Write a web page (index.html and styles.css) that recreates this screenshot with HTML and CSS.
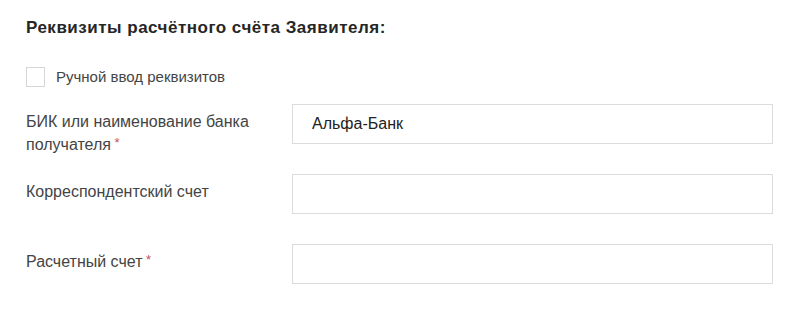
FILE: index.html
```html
<!DOCTYPE html>
<html lang="ru">
<head>
  <meta charset="UTF-8" />
  <title>Реквизиты</title>
  <link rel="stylesheet" href="styles.css">
</head>
<body>
  <div class="requisites">
    <h3>Реквизиты расчётного счёта Заявителя:</h3>

    <label class="manual">
      <input type="checkbox" />
      <span class="box"></span>
      Ручной ввод реквизитов
    </label>

    <div class="form-row">
      <div class="form-label">БИК или наименование банка получателя<span class="req"> *</span></div>
      <input class="form-input" type="text" value="Альфа-Банк" />
    </div>

    <div class="form-row">
      <div class="form-label">Корреспондентский счет</div>
      <input class="form-input" type="text" />
    </div>

    <div class="form-row">
      <div class="form-label">Расчетный счет<span class="req"> *</span></div>
      <input class="form-input" type="text" />
    </div>
  </div>
</body>
</html>
```

FILE: styles.css
```css
* {
  margin: 0;
  padding: 0;
  box-sizing: border-box;
  font-family: "Liberation Sans", Arial, sans-serif;
}

body {
  background: #fff;
}

.requisites {
  padding: 18px 0 0 26px;
  color: #444;
}

.requisites h3 {
  font-size: 17px;
  line-height: 20px;
  letter-spacing: 0.5px;
  font-weight: bold;
  color: #262626;
  margin-bottom: 29px;
}

.manual {
  display: flex;
  align-items: center;
  font-size: 15px;
  line-height: 20px;
  margin-bottom: 17px;
  cursor: pointer;
}

.manual input {
  display: none;
}

.manual .box {
  width: 19px;
  height: 20px;
  border: 1px solid #d6d6d6;
  background: #fff;
  margin-right: 11px;
}

.form-row {
  display: grid;
  grid-template-columns: 266px 481px;
  height: 40px;
  margin-bottom: 30px;
}

.form-label {
  font-size: 16px;
  line-height: 23px;
  padding-top: 6px;
  padding-right: 10px;
}

.req {
  font-size: 13px;
  line-height: 1;
  vertical-align: 3px;
  color: #c8505a;
}

.form-input {
  height: 40px;
  border: 1px solid #dcdcdc;
  padding: 0 19px;
  font-size: 16px;
  color: #222;
  outline: none;
}
```
